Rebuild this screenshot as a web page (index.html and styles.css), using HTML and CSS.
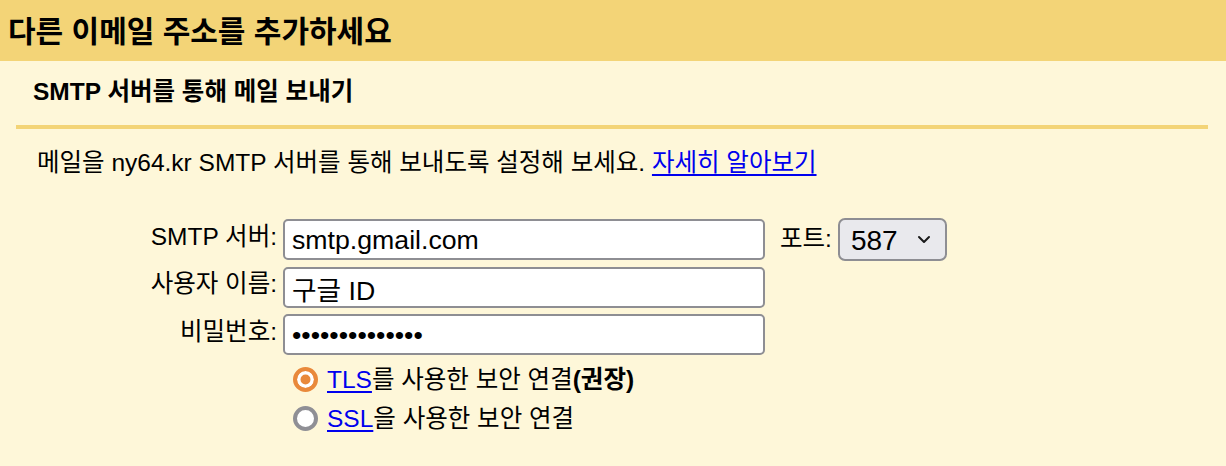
FILE: index.html
```html
<!DOCTYPE html>
<html lang="ko">
<head>
<meta charset="utf-8">
<title>다른 이메일 주소를 추가하세요</title>
<link rel="stylesheet" href="styles.css">
</head>
<body>
<header class="top">
  <h1 class="title">다른 이메일 주소를 추가하세요</h1>
</header>
<section class="panel">
  <h2 class="subtitle">SMTP 서버를 통해 메일 보내기</h2>
  <div class="divider"></div>
  <p class="desc">메일을 ny64.kr SMTP 서버를 통해 보내도록 설정해 보세요. <a href="#" class="link">자세히 알아보기</a></p>
  <form class="form">
    <label class="lbl r1" for="smtp">SMTP 서버:</label>
    <input class="field r1" id="smtp" type="text" value="smtp.gmail.com">
    <label class="port-lbl" for="port">포트:</label>
    <span class="select-wrap">
      <select class="select" id="port"><option>587</option><option>465</option></select>
      <svg class="chev" width="14" height="9" viewBox="0 0 14 9"><path d="M2 2 L7 7 L12 2" fill="none" stroke="#1a1a1a" stroke-width="2" stroke-linecap="round" stroke-linejoin="round"/></svg>
    </span>

    <label class="lbl r2" for="user">사용자 이름:</label>
    <input class="field r2" id="user" type="text" value="구글 ID">

    <label class="lbl r3" for="pw">비밀번호:</label>
    <input class="field pw r3" id="pw" type="password" value="aaaaaaaaaaaaaa">

    <div class="radios">
      <label class="radio-row"><input type="radio" name="sec" class="radio" checked><span><a href="#" class="link">TLS</a>를 사용한 보안 연결<b>(권장)</b></span></label>
      <label class="radio-row"><input type="radio" name="sec" class="radio"><span><a href="#" class="link">SSL</a>을 사용한 보안 연결</span></label>
    </div>
  </form>
</section>
</body>
</html>
```

FILE: styles.css
```css
html, body {
  margin: 0;
  padding: 0;
}
body {
  background: #fef7d9;
  font-family: "Liberation Sans", "Noto Sans CJK KR", sans-serif;
  color: #000;
  width: 1226px;
  height: 466px;
  overflow: hidden;
}
.top {
  background: #f3d477;
  height: 61px;
  display: flex;
  align-items: center;
  padding-left: 8px;
}
.title {
  margin: 0;
  font-size: 30px;
  font-weight: bold;
  line-height: 36px;
  padding-top: 2px;
}
.subtitle {
  margin: 0;
  padding: 16px 0 0 33px;
  box-sizing: border-box;
  height: 64px;
  font-size: 24.5px;
  font-weight: bold;
  line-height: 30px;
}
.divider {
  height: 4px;
  background: #f3d477;
  margin: 0 18px 0 16px;
}
.desc {
  margin: 0;
  padding: 19px 0 0 37px;
  font-size: 24.5px;
  line-height: 30px;
}
.link {
  color: #0000ee;
  text-decoration: underline;
  text-underline-offset: 3px;
}
.form {
  display: grid;
  grid-template-columns: 277px 482px auto auto;
  grid-template-rows: 41px 41px 41px auto;
  justify-content: start;
  column-gap: 6px;
  row-gap: 6.5px;
  margin-top: 41px;
  align-items: center;
}
.r1 { grid-row: 1; }
.r2 { grid-row: 2; }
.r3 { grid-row: 3; }
.lbl {
  grid-column: 1;
  justify-self: end;
  font-size: 24.5px;
  line-height: 30px;
  margin-bottom: 6px;
  white-space: nowrap;
}
.field {
  grid-column: 2;
  box-sizing: border-box;
  width: 482px;
  height: 41px;
  border: 2px solid #8e8e93;
  border-radius: 5px;
  background: #fff;
  font-family: "Liberation Sans", "Noto Sans CJK KR", sans-serif;
  font-size: 26.7px;
  padding: 2px 7px 0;
  color: #000;
  outline: none;
}
.pw {
  letter-spacing: 0;
}
.port-lbl {
  grid-column: 3;
  grid-row: 1;
  margin-left: 9px;
  font-size: 24.5px;
  line-height: 30px;
  margin-bottom: 2px;
  white-space: nowrap;
}
.select-wrap {
  grid-column: 4;
  grid-row: 1;
  position: relative;
  width: 109px;
  height: 43px;
}
.select {
  appearance: none;
  -webkit-appearance: none;
  box-sizing: border-box;
  width: 109px;
  height: 43px;
  border: 2px solid #8e8e93;
  border-radius: 7px;
  background: #e9e9ed;
  font-family: "Liberation Sans", "Noto Sans CJK KR", sans-serif;
  font-size: 28px;
  padding: 1px 0 0 11px;
  color: #000;
  outline: none;
}
.chev {
  position: absolute;
  right: 16px;
  top: 17px;
  pointer-events: none;
}
.radios {
  grid-column: 2;
  grid-row: 4;
  align-self: start;
  display: flex;
  flex-direction: column;
  gap: 9px;
  padding-top: 3px;
  white-space: nowrap;
}
.radio-row {
  display: flex;
  align-items: center;
  gap: 9px;
  font-size: 24.5px;
  line-height: 30px;
  margin-left: 10px;
}
.radio {
  appearance: none;
  -webkit-appearance: none;
  margin: 0;
  box-sizing: border-box;
  width: 25px;
  height: 25px;
  border-radius: 50%;
  border: 4px solid #8f8f95;
  background: #fff;
  flex: none;
}
.radio:checked {
  border-color: #e9893b;
  background: #e9893b;
  box-shadow: inset 0 0 0 3.5px #fff;
}
b {
  font-weight: bold;
}
```
